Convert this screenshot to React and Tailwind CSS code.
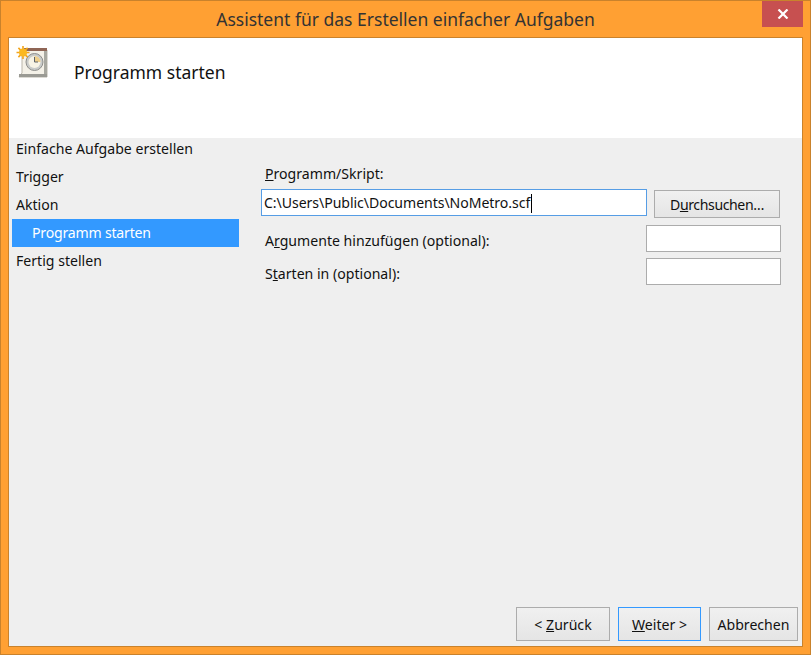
import React from 'react';

const font = { fontFamily: '"Noto Sans", sans-serif' };

// task scheduler icon: calendar page, clock and sun
const TaskIcon = () => (
  <svg width="32" height="32" viewBox="0 0 32 32" className="block">
    <path d="M6 4h25v27H3l3-4z" fill="#f4f1e8" stroke="#b9b5aa" strokeWidth="1" />
    <rect x="28" y="5" width="3" height="26" fill="#a8a8a0" />
    <rect x="3" y="28" width="28" height="3" fill="#9a9a94" />
    <rect x="8" y="2" width="23" height="3" fill="#8f6555" />
    <circle cx="18.5" cy="16" r="8.5" fill="#c9cbc9" stroke="#8e8e8c" strokeWidth="1" />
    <circle cx="18.5" cy="16" r="6" fill="#f8f4e6" />
    <path d="M18.5 16V10a6 6 0 0 1 6 6z" fill="#efcf8b" />
    <path d="M18.5 11v5h3.5" fill="none" stroke="#5f6468" strokeWidth="1" />
    <g stroke="#f2a41c" strokeWidth="1.6">
      <path d="M7 0v13M0.500 6.500h13M2.400 1.900l9.200 9.200M11.600 1.900l-9.200 9.200" />
    </g>
    <circle cx="7" cy="6.500" r="4" fill="#fbb81f" />
  </svg>
);

const StepRow = ({ label, active }) => (
  <div className={`flex h-[28px] items-center ${active ? 'bg-[#3399ff] pl-[20px] tracking-[-0.2px] text-white' : 'pl-[4px] text-[#111]'}`}>
    {label}
  </div>
);

const WinButton = ({ children, width, focused }) => (
  <button
    type="button"
    className={`h-[34px] border bg-gradient-to-b from-[#f0f0f0] to-[#e5e5e5] pt-[2px] text-[#111] ${focused ? 'border-[#3399ff]' : 'border-[#acacac]'} ${width}`}
  >
    {children}
  </button>
);

const App = () => {
  return (
    <div style={font} className="flex h-[655px] w-[811px] flex-col border border-[#c9822c] bg-[#ffa033] text-[14.1px] leading-none">
      {/* title bar */}
      <div className="relative flex h-[36px] shrink-0 items-center justify-center pt-[2px] text-[17.5px] text-[#333]">
        Assistent für das Erstellen einfacher Aufgaben
        <div className="absolute right-[7px] top-0 flex h-[26px] w-[41px] items-center justify-center bg-[#c75050]">
          <svg width="12" height="10" viewBox="0 0 12 10">
            <path d="M1.500 0.500l9 9M10.500 0.500l-9 9" stroke="#fff" strokeWidth="2.200" fill="none" />
          </svg>
        </div>
      </div>

      {/* client area */}
      <div className="mx-[7px] mb-[7px] flex min-h-0 flex-1 flex-col border border-[#c9822c] bg-[#efefef]">
        <div className="flex h-[100px] shrink-0 bg-white">
          <div className="ml-[7px] mt-[8px]"><TaskIcon /></div>
          <div className="ml-[26px] mt-[26px] text-[17.5px] text-[#111]">Programm starten</div>
        </div>

        <div className="flex min-h-0 flex-1">
          {/* steps */}
          <div className="ml-[3px] mt-[-3px] w-[227px] shrink-0">
            <StepRow label="Einfache Aufgabe erstellen" />
            <StepRow label="Trigger" />
            <StepRow label="Aktion" />
            <StepRow label="Programm starten" active />
            <StepRow label="Fertig stellen" />
          </div>

          {/* form */}
          <div className="ml-[22px] flex-1 text-[#111]">
            <div className="ml-[4px] mt-[29px] h-[22px]"><u>P</u>rogramm/Skript:</div>
            <div className="flex items-start">
              <div className="flex h-[27px] w-[386px] items-center border border-[#569de5] bg-white pl-[2px] pt-[2px] tracking-[-0.06px]">
                C:\Users\Public\Documents\NoMetro.scf
                <span className="ml-[1px] h-[19px] w-px bg-black" />
              </div>
              <button type="button" className="ml-[7px] mt-[1px] h-[28px] w-[126px] border border-[#acacac] bg-gradient-to-b from-[#f0f0f0] to-[#e5e5e5] pt-[2px] tracking-[-0.4px]">
                D<u>u</u>rchsuchen…
              </button>
            </div>
            <div className="mt-[7px] flex h-[27px] items-center">
              <div className="ml-[4px] w-[381px] pt-[6px]">A<u>r</u>gumente hinzufügen (optional):</div>
              <div className="h-[27px] w-[135px] border border-[#acacac] bg-white" />
            </div>
            <div className="mt-[6px] flex h-[27px] items-center">
              <div className="ml-[4px] w-[381px] pt-[6px]">S<u>t</u>arten in (optional):</div>
              <div className="h-[27px] w-[135px] border border-[#acacac] bg-white" />
            </div>
          </div>
        </div>

        {/* footer buttons */}
        <div className="flex justify-end gap-[8px] pb-[5px] pr-[4px]">
          <WinButton width="w-[94px]">&lt; <u>Z</u>urück</WinButton>
          <WinButton width="w-[83px]" focused><u>W</u>eiter &gt;</WinButton>
          <WinButton width="w-[89px]">Abbrechen</WinButton>
        </div>
      </div>
    </div>
  );
};

export default App;
